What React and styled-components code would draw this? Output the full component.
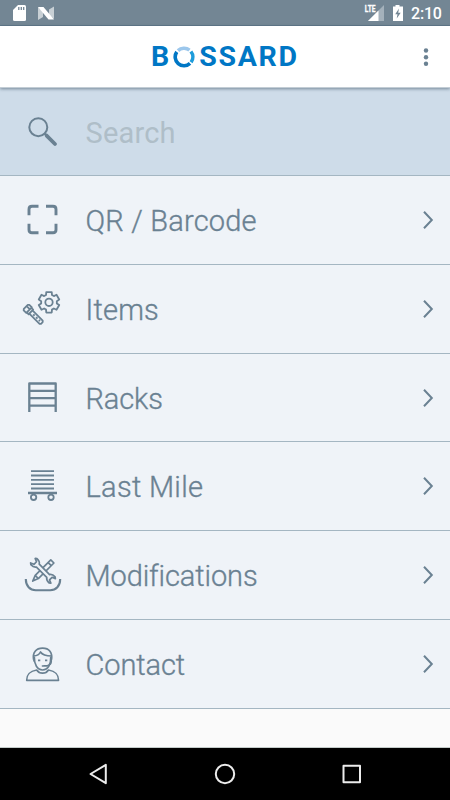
import React from "react";
import styled, { createGlobalStyle } from "styled-components";

const GlobalStyle = createGlobalStyle`
  * {
    box-sizing: border-box;
  }

  body {
    margin: 0;
    background: #fafafa;
    font-family: Roboto, "Open Sans", sans-serif;
  }
`;

const Screen = styled.div`
  display: flex;
  flex-direction: column;
  width: 450px;
  height: 800px;
  overflow: hidden;
  background: #fafafa;
`;

const StatusBar = styled.div`
  display: flex;
  flex: none;
  justify-content: space-between;
  height: 26px;
  background: #738694;
  border-bottom: 1px solid #607889;
  color: #fff;

  & svg {
    display: block;
  }
`;

const StatusGroup = styled.div`
  display: flex;
`;

const Clock = styled.span`
  width: 39px;
  font-size: 16px;
  font-weight: 500;
  letter-spacing: -0.2px;
  line-height: 28px;
  white-space: nowrap;
`;

const Header = styled.header`
  position: relative;
  z-index: 1;
  display: flex;
  flex: none;
  align-items: center;
  justify-content: space-between;
  height: 62px;
  padding-left: 151px;
  padding-right: 18px;
  background: #fff;
  border-bottom: 1px solid #c3cdd5;
  box-shadow: 0 1px 3px rgba(50, 70, 90, 0.55);
`;

const Logo = styled.div`
  display: flex;
  align-items: center;
  color: #0077c5;
  font-size: 28.5px;
  font-weight: 700;
  line-height: 60px;

  & svg {
    margin: 1px 4px 0 4px;
  }
`;

const LogoText = styled.span`
  letter-spacing: ${(props) => props.$track || 0}px;
`;

const MenuButton = styled.button`
  display: flex;
  padding: 0;
  border: 0;
  background: none;
`;

const Row = styled.div`
  display: flex;
  flex: none;
  align-items: center;
  height: ${(props) => (props.$search ? "88px" : "88.83px")};
  padding-left: 18px;
  padding-right: 12px;
  background: ${(props) => (props.$search ? "#cedce9" : "#eff3f8")};
  border-bottom: 1px solid #a4b6c2;
  color: ${(props) => (props.$search ? "#afbec8" : "#6a8192")};
`;

const RowIcon = styled.svg.attrs({
  width: 48,
  height: 48,
  viewBox: "0 0 48 48",
})`
  flex: none;
  fill: none;
  stroke: #6a8192;
  stroke-width: ${(props) => props.$line || 1.8};
  stroke-linejoin: round;

  & .handle {
    stroke-width: 3.8;
    stroke-linecap: round;
  }

  & .tray {
    stroke-width: 2.1;
  }

  & .wrench {
    fill: #eff3f8;
  }
`;

const Label = styled.span`
  flex: 1;
  padding-top: 2px;
  padding-left: 19.5px;
  font-size: 29px;
  font-weight: ${(props) => (props.$bold ? 400 : 300)};
  letter-spacing: ${(props) => props.$track}px;
  line-height: 40px;
  white-space: nowrap;
  -webkit-text-stroke: ${(props) => (props.$bold ? 0 : "0.35px")} currentColor;
`;

const Chevron = styled.svg`
  flex: none;
  fill: none;
  stroke: #6a8192;
  stroke-width: 2;
`;

const Spacer = styled.div`
  flex: 1;
  border-bottom: 1px solid #c3cbc9;
`;

const NavBar = styled.nav`
  display: flex;
  flex: none;
  align-items: center;
  justify-content: space-between;
  height: 52px;
  padding: 0 86px;
  background: #000;

  & svg {
    fill: none;
    stroke: #ececec;
    stroke-width: 2;
    stroke-linejoin: round;
  }
`;

// six teeth around the centre of the gear
const gearPath = () => {
  const points = [];
  for (let i = 0; i < 6; i++) {
    const mid = i * 60 - 90;
    [
      [-22, 7.9],
      [-15, 10.6],
      [15, 10.6],
      [22, 7.9],
    ].forEach(([offset, r]) => {
      const a = ((mid + offset) * Math.PI) / 180;
      points.push(`${(31 + r * Math.cos(a)).toFixed(2)} ${(17.3 + r * Math.sin(a)).toFixed(2)}`);
    });
  }
  return `M${points.join("L")}Z`;
};

const SearchIcon = () => (
  <RowIcon $line={2}>
    <circle cx="20.3" cy="19.2" r="9" />
    <path d="M26.6 25.5l2.4 2.4" />
    <path className="handle" d="M28.6 27.6l8.4 8.4" />
  </RowIcon>
);

const ScanIcon = () => (
  <RowIcon $line={2.9}>
    <path d="M11 19.3v-6.1q0-3 3-3h6.500M28 10.200h7q3 0 3 3v6.100M38 27.700v6q0 3-3 3h-7M20.500 36.700H14q-3 0-3-3v-6" />
  </RowIcon>
);

const ItemsIcon = () => (
  <RowIcon>
    <path d={gearPath()} />
    <circle cx="31" cy="17.3" r="3.7" />
    <g transform="translate(7.8 21.9) rotate(45)">
      <path d="M0-2.800L1-4h3.600v8H1L0 2.800ZM0-1.200h4.600M4.600-3.200h2.600v6.400H4.600M7.200-2.200h14.500l1 1v2.400l-1 1H7.200M10.500 0h2M14.500 0h2M18.500 0h1.500" />
    </g>
  </RowIcon>
);

const RacksIcon = () => (
  <RowIcon $line={2.3}>
    <path d="M11.300 38V9.500h26.400V38M11.300 16.900h26.400M11.300 24.100h26.400M11.300 31.600h26.400" />
  </RowIcon>
);

const LastMileIcon = () => (
  <RowIcon $line={1.8}>
    <path d="M13 9.200h23M13 13.500h23M13 17.800h23M13 22.200h23M13 26.500h23M10 30.600h29M10 31.300h29" />
    <circle cx="15.600" cy="35.300" r="2.700" />
    <circle cx="33" cy="35.300" r="2.700" />
  </RowIcon>
);

const ModificationsIcon = () => (
  <RowIcon $line={1.7}>
    <path className="tray" d="M7.800 28c0 7 4.200 11.200 10 11.200h14.400c5.800 0 10-4.200 10-11.200" />
    <g transform="translate(25 19.800) rotate(-45)">
      <path d="M-8.800-2.200H13.200V2.200H-8.800L-14.500 0ZM-8.800-2.200V2.200M9.500-2.200V2.200" />
    </g>
    <g transform="translate(25 19.800) rotate(45)">
      <path
        className="wrench"
        d="M-7.300-2H7.300Q9-4.500 12.800-4.300L14.300-3.200 11-1.800V1.800L14.300 3.200 12.800 4.300Q9 4.500 7.300 2H-7.300Q-9 4.500-12.800 4.300L-14.300 3.200-11 1.800V-1.800L-14.300-3.200-12.800-4.300Q-9-4.500-7.300-2Z"
      />
    </g>
  </RowIcon>
);

const ContactIcon = () => (
  <RowIcon $line={1.7}>
    <path d="M15.600 19.500c-1.200-7 2.400-11.300 9-11.300s10 4.300 8.900 11.300M15.600 16c3.200-.2 5.600-1.200 6.900-4 2 3 6 4 11 4" />
    <path d="M16.300 17c-.2 7.500 3 13 8.300 13s8.400-5.500 8.200-13" />
    <path d="M16 16.500v5M33.200 16.500v5q0 3.200-4 4.300h-3.700M23.800 26h3.700M20 20.300h2.300M27 20.300h2.300" />
    <path d="M18.700 30c-5.200 1-10 2.800-10 10.300h31.800c0-7.500-4.800-9.300-10-10.300-2.600 4.200-9.200 4.200-11.800 0Z" />
  </RowIcon>
);

const items = [
  { label: "QR / Barcode", Icon: ScanIcon, track: 0.2 },
  { label: "Items", Icon: ItemsIcon, track: 0.2 },
  { label: "Racks", Icon: RacksIcon, track: -0.1 },
  { label: "Last Mile", Icon: LastMileIcon, track: 0.3 },
  { label: "Modifications", Icon: ModificationsIcon, track: -0.1 },
  { label: "Contact", Icon: ContactIcon, track: -0.1 },
];

export default function App() {
  return (
    <>
      <GlobalStyle />
      <Screen>
        <StatusBar>
          <StatusGroup>
            <svg width="60" height="25" viewBox="0 0 60 25">
              <path d="M18 5h6.500q1.500 0 1.500 1.500v13q0 1.500-1.500 1.500h-10q-1.500 0-1.500-1.500V10Z" fill="#fff" />
              <path d="M18.800 7v3M21.300 7v3M23.700 7v3" stroke="#738694" strokeWidth="1.300" />
              <path d="M38 7l5 4v6l-5 3ZM54 6.500v12.500l-5-4V9.500Z" fill="#c8d0d5" />
              <path d="M38 7h5.500L54 19.500h-5.500Z" fill="#fff" />
            </svg>
          </StatusGroup>
          <StatusGroup>
            <svg width="50" height="25" viewBox="361 0 50 25">
              <path d="M384 5v16h-16Z" fill="#a4b1bb" />
              <path d="M378.500 10.500V21h-10.500Z" fill="#fff" />
              <text
                x="364.800"
                y="12.200"
                fill="#fff"
                stroke="#fff"
                strokeWidth="0.300"
                fontSize="9.500"
                fontWeight="700"
                textLength="10.800"
                lengthAdjust="spacingAndGlyphs">
                LTE
              </text>
              <path d="M395.500 5h4v1.500h3.500V21h-10V6.500h2.500Z" fill="#fff" />
              <path d="M399 8.500l-3.800 5.700h2.300l-.8 4.300 4-5.700h-2.500Z" fill="#738694" />
            </svg>
            <Clock>2:10</Clock>
          </StatusGroup>
        </StatusBar>
        <Header>
          <Logo>
            <LogoText>B</LogoText>
            <svg width="22" height="22" viewBox="-11 -11 22 22" fill="none" strokeWidth="3.600">
              <path d="M-6-6.400A8.800 8.800 0 0 1 5.500-6.900" stroke="#9cc7ec" />
              <path d="M6.900-5.500A8.800 8.800 0 0 1 7.100 5.200" stroke="#1d9cdb" />
              <path d="M6 6.400A8.800 8.800 0 0 1-7.200-5.100" stroke="#0077c5" />
            </svg>
            <LogoText $track={1.7}>SSARD</LogoText>
          </Logo>
          <MenuButton aria-label="More">
            <svg width="12" height="20" viewBox="0 0 12 20" fill="#6a8192">
              <circle cx="6" cy="3.500" r="2.200" />
              <circle cx="6" cy="10.200" r="2.200" />
              <circle cx="6" cy="16.800" r="2.200" />
            </svg>
          </MenuButton>
        </Header>
        <Row $search>
          <SearchIcon />
          <Label $bold $track={0.2}>
            Search
          </Label>
        </Row>
        {items.map(({ label, Icon, track }) => (
          <Row key={label}>
            <Icon />
            <Label $track={track}>{label}</Label>
            <Chevron width="20" height="24" viewBox="0 0 20 24">
              <path d="M6 3.800l7.800 8.200L6 20.200" />
            </Chevron>
          </Row>
        ))}
        <Spacer />
        <NavBar>
          <svg width="24" height="24" viewBox="0 0 24 24">
            <path d="M19.800 2.800v18.400L4.500 12Z" />
          </svg>
          <svg width="24" height="24" viewBox="0 0 24 24">
            <circle cx="12" cy="12" r="9.200" />
          </svg>
          <svg width="24" height="24" viewBox="0 0 24 24">
            <rect x="3.500" y="3.800" width="16.500" height="16.500" />
          </svg>
        </NavBar>
      </Screen>
    </>
  );
}
